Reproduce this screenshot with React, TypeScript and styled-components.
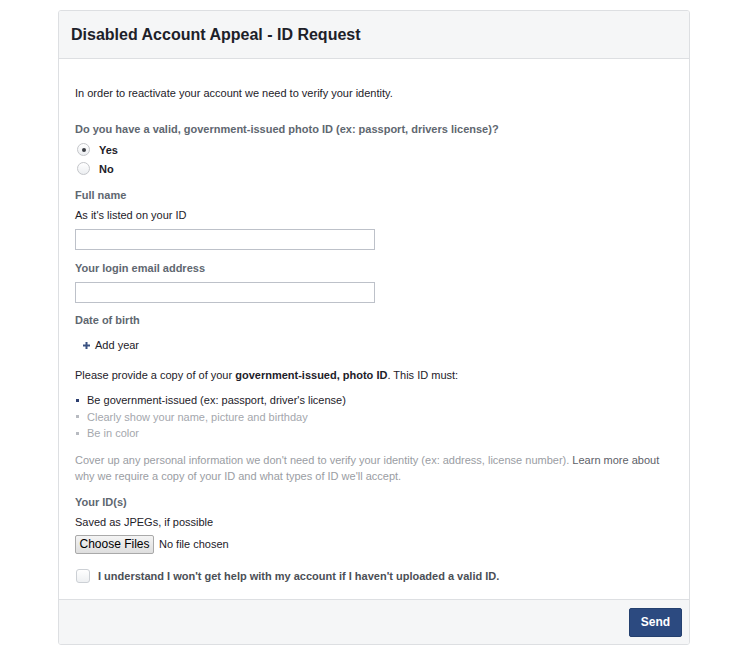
import styled, { createGlobalStyle } from 'styled-components';

const GlobalStyle = createGlobalStyle`
  html, body {
    margin: 0;
    padding: 0;
    background: #ffffff;
  }
  body {
    font-family: "Liberation Sans", Arial, Helvetica, sans-serif;
    font-size: 11px;
    color: #1d2129;
  }
`;

const Page = styled.div`
  padding: 10px 0 10px 58px;
`;

const Card = styled.div`
  width: 630px;
  border: 1px solid #dddfe2;
  border-radius: 3px;
  background: #fff;
  overflow: hidden;
`;

const Header = styled.div`
  background: #f5f6f7;
  border-bottom: 1px solid #dddfe2;
  height: 47px;
  display: flex;
  align-items: center;
  padding: 0 12px;
`;

const Title = styled.h2`
  margin: 0;
  font-size: 16px;
  font-weight: bold;
  color: #1d2129;
`;

const Body = styled.div`
  padding: 26px 16px 15px 16px;
  display: flex;
  flex-direction: column;
`;

const Text = styled.div<{ gap?: number }>`
  line-height: 16px;
  margin-top: ${p => p.gap ?? 0}px;
  color: #1d2129;
`;

const Label = styled.div<{ gap?: number }>`
  line-height: 16px;
  font-weight: bold;
  color: #606770;
  margin-top: ${p => p.gap ?? 0}px;
`;

const RadioGroup = styled.div`
  margin-top: 3px;
  display: flex;
  flex-direction: column;
`;

const RadioRow = styled.label`
  display: flex;
  align-items: center;
  height: 19px;
  gap: 9px;
  padding-left: 2px;
  font-weight: bold;
  color: #1d2129;
`;

const RadioDot = styled.span<{ checked?: boolean }>`
  position: relative;
  width: 13px;
  height: 13px;
  border-radius: 50%;
  border: 1px solid #c4c6ca;
  background: linear-gradient(#ffffff, #eceef1);
  box-sizing: border-box;
  &::after {
    content: '';
    display: ${p => (p.checked ? 'block' : 'none')};
    position: absolute;
    left: 3.5px;
    top: 3.5px;
    width: 4px;
    height: 4px;
    border-radius: 50%;
    background: #3b3e44;
  }
`;

const Input = styled.input`
  margin-top: 6px;
  width: 300px;
  height: 21px;
  box-sizing: border-box;
  border: 1px solid #bdc1c9;
  padding: 2px 4px;
  font: inherit;
  outline: none;
`;

const AddLink = styled.div`
  margin-top: 9px;
  display: flex;
  align-items: center;
  gap: 5px;
  padding-left: 8px;
  line-height: 16px;
  color: #1d2129;
`;

const List = styled.ul`
  list-style: none;
  margin: 9px 0 0 0;
  padding: 0;
`;

const Item = styled.li<{ active?: boolean }>`
  display: flex;
  align-items: center;
  gap: 8px;
  line-height: 16.5px;
  padding-left: 1px;
  color: ${p => (p.active ? '#1d2129' : '#a4a7ad')};
  &::before {
    content: '';
    width: 3px;
    height: 3px;
    background: ${p => (p.active ? '#2d3f70' : '#b8bbc1')};
  }
`;

const Note = styled.p`
  margin: 10px 0 0 0;
  line-height: 16px;
  color: #9a9da3;
  span {
    color: #5d6168;
  }
`;

const FileRow = styled.div`
  margin-top: 5px;
  display: flex;
  align-items: center;
  gap: 5px;
  color: #1d2129;
`;

const FileButton = styled.button`
  height: 19px;
  width: 79px;
  padding: 0;
  font: inherit;
  font-size: 12px;
  color: #000;
  border: 1px solid #a9a9a9;
  border-radius: 2px;
  background: linear-gradient(#f4f4f4, #dedede);
`;

const CheckRow = styled.label`
  margin-top: 14px;
  display: flex;
  align-items: center;
  gap: 8px;
  line-height: 16px;
  padding-left: 1px;
  font-weight: bold;
  color: #4b4f56;
`;

const CheckBox = styled.span`
  width: 14px;
  height: 14px;
  box-sizing: border-box;
  border: 1px solid #ccd0d5;
  border-radius: 3px;
  background: linear-gradient(#ffffff, #eef0f2);
`;

const Footer = styled.div`
  background: #f5f6f7;
  border-top: 1px solid #dddfe2;
  display: flex;
  justify-content: flex-end;
  padding: 8px 7px 7px;
`;

const SendButton = styled.button`
  height: 29px;
  width: 53px;
  padding: 0;
  border: 1px solid #24406f;
  border-radius: 2px;
  background: #2c4a80;
  color: #fff;
  font: inherit;
  font-size: 12px;
  font-weight: bold;
`;

const Plus = () => (
  <svg width="7" height="7" viewBox="0 0 7 7">
    <path d="M2.5 0h2v2.5H7v2H4.5V7h-2V4.5H0v-2h2.5z" fill="#3b5282" />
  </svg>
);

const App = () => (
  <>
    <GlobalStyle />
    <Page>
      <Card>
        <Header>
          <Title>Disabled Account Appeal - ID Request</Title>
        </Header>
        <Body>
          <Text>In order to reactivate your account we need to verify your identity.</Text>
          <Label gap={20}>Do you have a valid, government-issued photo ID (ex: passport, drivers license)?</Label>
          <RadioGroup>
            <RadioRow>
              <RadioDot checked />
              Yes
            </RadioRow>
            <RadioRow>
              <RadioDot />
              No
            </RadioRow>
          </RadioGroup>
          <Label gap={9}>Full name</Label>
          <Text gap={4}>As it's listed on your ID</Text>
          <Input />
          <Label gap={10}>Your login email address</Label>
          <Input />
          <Label gap={9}>Date of birth</Label>
          <AddLink>
            <Plus />
            Add year
          </AddLink>
          <Text gap={14}>
            Please provide a copy of of your <b>government-issued, photo ID</b>. This ID must:
          </Text>
          <List>
            <Item active>Be government-issued (ex: passport, driver's license)</Item>
            <Item>Clearly show your name, picture and birthday</Item>
            <Item>Be in color</Item>
          </List>
          <Note>
            Cover up any personal information we don't need to verify your identity (ex: address, license number).{' '}
            <span>Learn more about</span>
            <br />
            why we require a copy of your ID and what types of ID we'll accept.
          </Note>
          <Label gap={10}>Your ID(s)</Label>
          <Text gap={4}>Saved as JPEGs, if possible</Text>
          <FileRow>
            <FileButton>Choose Files</FileButton>
            No file chosen
          </FileRow>
          <CheckRow>
            <CheckBox />
            I understand I won't get help with my account if I haven't uploaded a valid ID.
          </CheckRow>
        </Body>
        <Footer>
          <SendButton>Send</SendButton>
        </Footer>
      </Card>
    </Page>
  </>
);

export default App;
